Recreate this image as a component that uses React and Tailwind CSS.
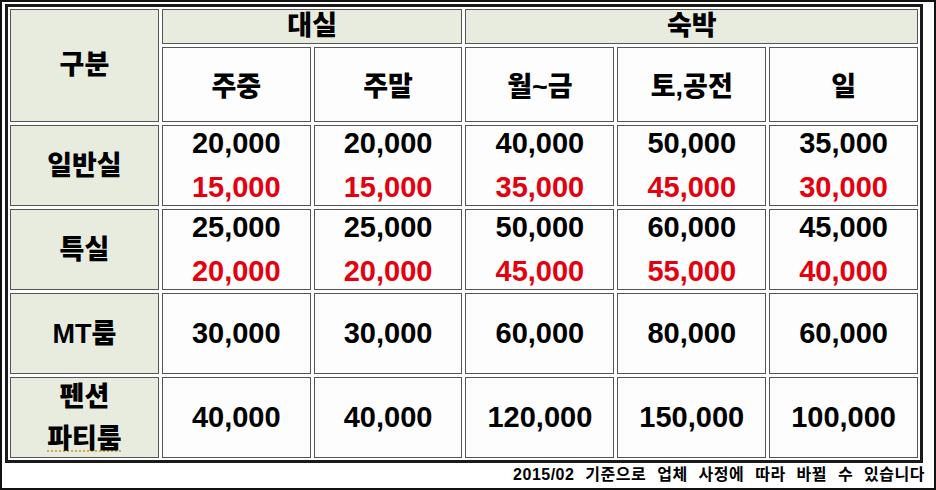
const rows = [
  {
    label: ["일반실"],
    prices: [
      ["20,000", "15,000"],
      ["20,000", "15,000"],
      ["40,000", "35,000"],
      ["50,000", "45,000"],
      ["35,000", "30,000"],
    ],
  },
  {
    label: ["특실"],
    prices: [
      ["25,000", "20,000"],
      ["25,000", "20,000"],
      ["50,000", "45,000"],
      ["60,000", "55,000"],
      ["45,000", "40,000"],
    ],
  },
  {
    label: ["MT룸"],
    prices: [["30,000"], ["30,000"], ["60,000"], ["80,000"], ["60,000"]],
  },
  {
    label: ["펜션", "파티룸"],
    prices: [["40,000"], ["40,000"], ["120,000"], ["150,000"], ["100,000"]],
  },
];

const cell = "flex items-center justify-center border border-[#555]";
const head = `${cell} bg-[#e8ecdf] text-[27px] font-black text-black`;
const body = `${cell} bg-[#fdfdfd]`;

const Prices = ({ values }) => {
  if (values.length === 1) {
    return (
      <span className="font-['Liberation_Sans',sans-serif] text-[29px] font-bold leading-[29px] text-black">
        {values[0]}
      </span>
    );
  }
  return (
    <div className="flex flex-col items-center gap-[15px] font-['Liberation_Sans',sans-serif] text-[29px] font-bold leading-[29px]">
      <span className="text-black">{values[0]}</span>
      <span className="text-[#e3000f]">{values[1]}</span>
    </div>
  );
};

const App = () => {
  return (
    <div className="h-[490px] w-[936px] overflow-hidden border-2 border-[#111] bg-white font-['Liberation_Sans','Noto_Sans_CJK_KR',sans-serif]">
      <div className="pl-[3px] pt-[2px]">
        <div className="grid w-[918px] grid-cols-6 grid-rows-[35px_75px_81px_81px_81px_81px] gap-[3px] border-[3px] border-[#1a1a1a] bg-white p-[2px]">
          <div className={`${head} row-span-2`}>구분</div>
          <div className={`${head} col-span-2`}>대실</div>
          <div className={`${head} col-span-3`}>숙박</div>

          {["주중", "주말", "월~금", "토,공전", "일"].map((t) => (
            <div key={t} className={`${body} pt-[5px] text-[27px] font-black text-black`}>
              {t}
            </div>
          ))}

          {rows.map((row) => (
            <div key={row.label.join()} className="contents">
              <div className={`${head} flex-col gap-[8px] leading-[34px]`}>
                {row.label.map((l, i) =>
                  l === "파티룸" ? (
                    <span key={i} className="underline decoration-[#d6a64c] decoration-dotted decoration-2 underline-offset-[3px]">
                      {l}
                    </span>
                  ) : (
                    <span key={i}>{l}</span>
                  )
                )}
              </div>
              {row.prices.map((p, i) => (
                <div key={i} className={body}>
                  <Prices values={p} />
                </div>
              ))}
            </div>
          ))}
        </div>
      </div>
      <div className="flex justify-end pr-[9px] pt-[1px]">
        <span className="font-['Liberation_Sans','Noto_Sans_CJK_KR',sans-serif] text-[16px] font-bold leading-[22px] tracking-[0.5px] text-black [word-spacing:6px]">
          2015/02 기준으로 업체 사정에 따라 바뀔 수 있습니다
        </span>
      </div>
    </div>
  );
};

export default App;
